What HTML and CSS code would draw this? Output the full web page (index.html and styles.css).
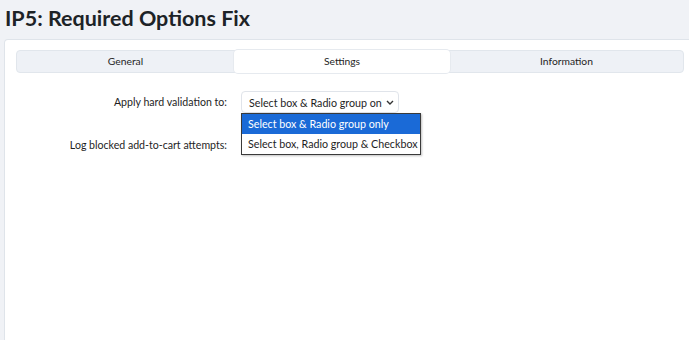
FILE: index.html
```html
<!DOCTYPE html>
<html lang="en">
<head>
  <meta charset="UTF-8">
  <title>IP5: Required Options Fix</title>
  <link rel="stylesheet" href="styles.css">
</head>
<body>
  <h1 class="page-title">IP5: Required Options Fix</h1>

  <div class="panel">
    <div class="tabs">
      <div class="tab">General</div>
      <div class="tab active">Settings</div>
      <div class="tab">Information</div>
    </div>

    <div class="form">
      <div class="row">
        <label class="row-label">Apply hard validation to:</label>
        <div class="field">
          <div class="select">
            <span class="select-value">Select box &amp; Radio group only</span>
            <svg class="chevron" width="8" height="5" viewBox="0 0 8 5">
              <path d="M1 1l3 3 3-3" fill="none" stroke="#333" stroke-width="1.4"/>
            </svg>
          </div>
          <!-- open dropdown list -->
          <ul class="options">
            <li class="option selected">Select box &amp; Radio group only</li>
            <li class="option">Select box, Radio group &amp; Checkbox</li>
          </ul>
        </div>
      </div>

      <div class="row">
        <label class="row-label">Log blocked add-to-cart attempts:</label>
        <div class="field"></div>
      </div>
    </div>
  </div>
</body>
</html>
```

FILE: styles.css
```css
/* General Styles */
body {
  font-family: Lato, "Noto Sans", sans-serif;
  background-color: #f0f2f6;
  color: #1e1e1e;
  margin: 0;
  overflow: hidden;
  height: 340px;
}

.page-title {
  margin: 0;
  padding: 2px 0 0 5px;
  font-size: 21.5px;
  font-weight: 700;
  color: #1d2327;
  line-height: 32px;
  box-sizing: border-box;
  height: 39px;
}

.panel {
  margin-left: 4px;
  width: calc(100% + 20px);
  height: 301px;
  background-color: #fff;
  border: 1px solid #dfe4ea;
  border-bottom: none;
  border-radius: 4px 4px 0 0;
  padding: 10px 11px;
  box-sizing: border-box;
}

/* Tabs */
.tabs {
  display: grid;
  grid-template-columns: 217px 216px 1fr;
  width: 668px;
  height: 23px;
  background-color: #eef1f6;
  border: 1px solid #e1e6ec;
  border-radius: 4px;
  box-sizing: border-box;
}

.tab {
  font-size: 10.3px;
  line-height: 21px;
  text-align: center;
  color: #1e1e1e;
}

.tab.active {
  background-color: #fff;
  border-radius: 4px;
  margin: -1px 0;
  line-height: 23px;
  box-shadow: 0 0 0 1px #e6eaef;
}

/* Form */
.form {
  padding-top: 18px;
}

.row {
  display: flex;
  align-items: center;
  gap: 14px;
  height: 22px;
  margin-bottom: 21px;
}

.row-label {
  width: 211px;
  text-align: right;
  font-size: 10.6px;
  color: #1e1e1e;
}

.field {
  position: relative;
}

.select {
  display: flex;
  align-items: center;
  width: 158px;
  height: 22px;
  border: 1px solid #e0e4ea;
  border-radius: 4px;
  box-sizing: border-box;
  padding: 0 4px 0 7px;
  background-color: #fff;
}

.select-value {
  flex: 1;
  overflow: hidden;
  white-space: nowrap;
  font-size: 10.7px;
  color: #1e1e1e;
  margin-right: 4px;
}

.options {
  position: absolute;
  top: 22px;
  left: 0;
  width: 178px;
  margin: 0;
  padding: 0;
  list-style: none;
  background-color: #fff;
  border: 1px solid #3a3a3a;
  box-shadow: 1px 1px 2px rgba(0, 0, 0, 0.25);
  z-index: 2;
}

.option {
  height: 20px;
  line-height: 20px;
  padding-left: 6px;
  font-size: 10.7px;
  white-space: nowrap;
  color: #1e1e1e;
}

.option.selected {
  background-color: #1a6ad7;
  color: #fff;
}
```
